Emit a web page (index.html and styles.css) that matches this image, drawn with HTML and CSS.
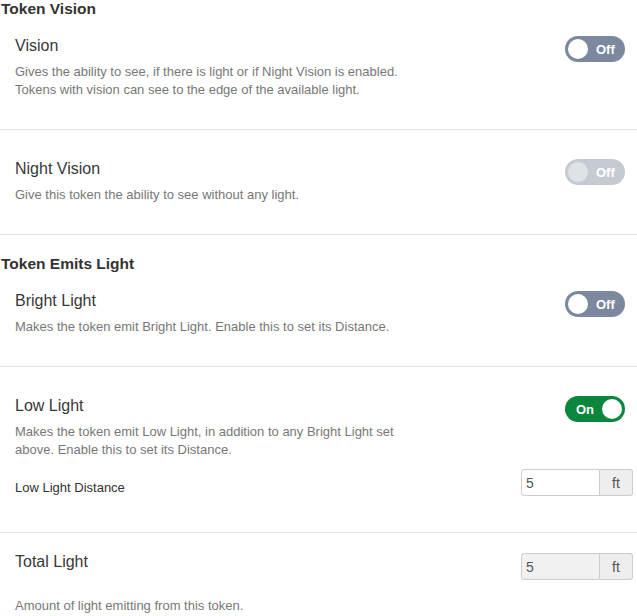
FILE: index.html
```html
<!DOCTYPE html>
<html lang="en">
<head>
  <meta charset="UTF-8" />
  <meta name="viewport" content="width=device-width, initial-scale=1.0"/>
  <title>Token Vision &amp; Light</title>
  <link rel="stylesheet" href="styles.css">
</head>
<body>
  <div class="settings">
    <h4 class="group-title">Token Vision</h4>

    <div class="setting first">
      <div class="setting-row">
        <div class="setting-text">
          <div class="setting-name">Vision</div>
          <p class="setting-desc">Gives the ability to see, if there is light or if Night Vision is enabled. Tokens with vision can see to the edge of the available light.</p>
        </div>
        <span class="toggle"><span class="knob"></span><span class="toggle-text">Off</span></span>
      </div>
    </div>

    <div class="setting">
      <div class="setting-row">
        <div class="setting-text">
          <div class="setting-name">Night Vision</div>
          <p class="setting-desc">Give this token the ability to see without any light.</p>
        </div>
        <span class="toggle disabled"><span class="knob"></span><span class="toggle-text">Off</span></span>
      </div>
    </div>

    <h4 class="group-title spaced">Token Emits Light</h4>

    <div class="setting first">
      <div class="setting-row">
        <div class="setting-text">
          <div class="setting-name">Bright Light</div>
          <p class="setting-desc">Makes the token emit Bright Light. Enable this to set its Distance.</p>
        </div>
        <span class="toggle"><span class="knob"></span><span class="toggle-text">Off</span></span>
      </div>
    </div>

    <div class="setting low-light">
      <div class="setting-row">
        <div class="setting-text">
          <div class="setting-name">Low Light</div>
          <p class="setting-desc">Makes the token emit Low Light, in addition to any Bright Light set above. Enable this to set its Distance.</p>
        </div>
        <span class="toggle on"><span class="toggle-text">On</span><span class="knob"></span></span>
      </div>
      <div class="distance-row">
        <label class="distance-label" for="low-dist">Low Light Distance</label>
        <div class="input-group">
          <input id="low-dist" class="form-control" type="text" value="5">
          <span class="addon">ft</span>
        </div>
      </div>
    </div>

    <div class="setting total">
      <div class="total-row">
        <div class="setting-name">Total Light</div>
        <div class="input-group">
          <input class="form-control" type="text" value="5" disabled>
          <span class="addon">ft</span>
        </div>
      </div>
      <p class="setting-desc total-desc">Amount of light emitting from this token.</p>
    </div>
  </div>
</body>
</html>
```

FILE: styles.css
```css
* {
  box-sizing: border-box;
}
body {
  margin: 0;
  font-family: "Liberation Sans", Arial, sans-serif;
  color: #333;
  background: #fff;
}

.group-title {
  margin: 0 0 16px 1px;
  font-size: 15.5px;
  line-height: 17px;
  font-weight: bold;
  color: #333;
}
.group-title.spaced {
  margin-top: 20px;
}

.setting {
  padding: 26px 4px 30px 15px;
  border-bottom: 1px solid #e3e3e3;
}
.setting.first {
  padding-top: 0;
}
.setting.low-light {
  padding-bottom: 36px;
}
.setting.total {
  padding-top: 16px;
  border-bottom: none;
}

.setting-row {
  display: flex;
  justify-content: space-between;
  align-items: flex-start;
}
.setting-text {
  width: 400px;
}
.setting-name {
  font-size: 16px;
  line-height: 26px;
  color: #383838;
}
.setting-desc {
  margin: 4px 0 0;
  font-size: 13px;
  line-height: 18px;
  color: #777;
}

/* toggle switch */
.toggle {
  display: flex;
  align-items: center;
  width: 60px;
  height: 26px;
  margin: 3px 8px 0 0;
  padding: 0 3px;
  border-radius: 13px;
  background: #7b889e;
  color: #fff;
  font-size: 13px;
  font-weight: bold;
}
.toggle .knob {
  width: 20px;
  height: 20px;
  border-radius: 50%;
  background: #fff;
}
.toggle .toggle-text {
  margin-left: 8px;
}
.toggle.disabled {
  background: #c5cad3;
}
.toggle.disabled .knob {
  background: #dfe2e7;
}
.toggle.on {
  background: #0a873c;
  justify-content: space-between;
  padding-left: 11px;
}
.toggle.on .toggle-text {
  margin-left: 0;
}

/* distance inputs */
.distance-row {
  display: flex;
  justify-content: space-between;
  align-items: flex-end;
  margin-top: 10px;
}
.distance-label {
  font-size: 13px;
  line-height: 17px;
  color: #333;
}
.input-group {
  display: flex;
  height: 27px;
}
.form-control {
  width: 79px;
  height: 27px;
  margin: 0;
  padding: 0 4px;
  border: 1px solid #ccc;
  border-radius: 3px 0 0 3px;
  font-family: inherit;
  font-size: 14px;
  color: #555;
  background: #fff;
}
.form-control:disabled {
  background: #f1f1f1;
  color: #555;
}
.addon {
  display: flex;
  align-items: center;
  justify-content: center;
  width: 33px;
  border: 1px solid #ccc;
  border-left: none;
  border-radius: 0 3px 3px 0;
  background: #eee;
  font-size: 14px;
  color: #555;
}

.total-row {
  display: flex;
  justify-content: space-between;
  align-items: flex-start;
}
.total-row .input-group {
  margin-top: 4px;
}
.total-desc {
  margin-top: 17px;
}
```
